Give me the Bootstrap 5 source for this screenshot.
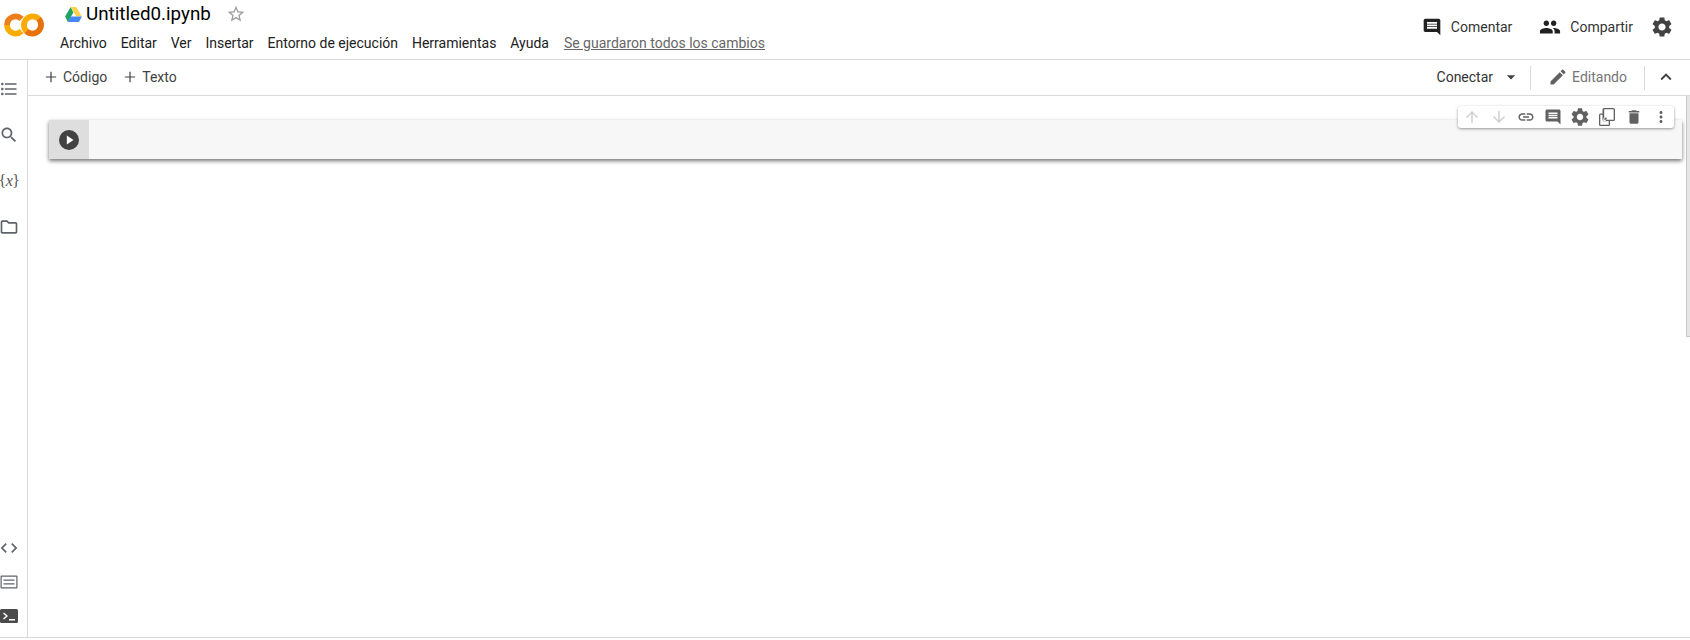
<!DOCTYPE html>
<html lang="es">
<head>
<meta charset="utf-8">
<title>Untitled0.ipynb</title>
<link href="https://cdn.jsdelivr.net/npm/bootstrap@5.3.0/dist/css/bootstrap.min.css" rel="stylesheet">
<style>
html,body{height:640px;overflow:hidden;background:#fff}
body{font-family:Roboto,"Liberation Sans",sans-serif;font-size:14px;color:#212121;line-height:20px}
svg{display:block;fill:currentColor;flex:none}
.app-shell{height:638px;border-bottom:1px solid #dadada}
.top-head{height:60px;border-bottom:1px solid #dadada;padding-left:4px}
.logo-slot{width:41px;height:59px;padding-top:13px}
.title-col{margin-left:15px;width:900px}
.title-line{height:33px;padding-bottom:5px;padding-left:5px}
.doc-name{font-size:18.8px;line-height:22px;color:#000;margin-left:4px;width:131px}
.star-ic{margin-left:9px;color:#9e9e9e}
.menu-line{gap:13.9px;height:20px}
.save-note{color:#666;text-decoration:underline;margin-left:1px}
.head-act{color:#333;padding-right:18px;height:54px}
.act-lbl{margin-left:9px}
.act-one{margin-right:27px}
.side-rail{width:28px;border-right:1px solid #dadada;color:#5f6368}
.rail-top,.rail-low{display:flex;flex-direction:column;align-items:center;padding-right:9px}
.rail-top{padding-top:19px}
.rail-low{padding-bottom:11px;gap:14px}
.rail-item{height:20px;display:flex;align-items:center;justify-content:center;margin-bottom:26px}
.math-ic{font-family:"Liberation Serif",serif;font-size:16px;color:#555;white-space:nowrap;letter-spacing:-.5px}
.tool-row{height:36px;border-bottom:1px solid #dadada;padding:0 13px 2px 17px;color:#424242}
.add-btn{margin-right:17px;gap:6px;color:#424242}
.add-btn svg{width:12px;height:12px}
.conn-lbl{color:#333}
.tool-sep{width:1px;height:24px;background:#dadada;margin-top:2px}
.edit-lbl{color:#757575}
.work-area{position:relative;flex:1;min-height:0}
.scroll-thumb{position:absolute;right:0;top:0;width:4px;height:241px;background:#e6e6e6;border-left:1px solid #c8c8c8;border-bottom:1px solid #c8c8c8}
.code-cell{position:absolute;left:21px;top:24px;width:1633px;height:39px;background:#f7f7f7;box-shadow:0 2px 4px rgba(0,0,0,.55)}
.run-gutter{width:40px;background:#dedede}
.run-dot{width:20px;height:20px;border-radius:50%;background:#424242;color:#fff}
.cell-bar{position:absolute;left:1430px;top:10px;width:216px;height:22px;background:#fff;border-radius:3px;box-shadow:0 1px 3px rgba(0,0,0,.4);color:#616161}
.bar-slot{width:27px;height:22px}
.bar-slot.dim{color:#cfcfcf}
</style>
</head>
<body>
<div class="app-shell d-flex flex-column">
  <header class="top-head d-flex">
    <div class="logo-slot">
      <svg width="41" height="24" viewBox="0 0 41 24">
        <path d="M17.650 18.150A8.700 8.700 0 0 1 3 12" stroke="#f9ab00" stroke-width="5.800" fill="none"/>
        <path d="M17.650 5.850A8.700 8.700 0 0 0 3 12" stroke="#ee7d1b" stroke-width="5.800" fill="none"/>
        <path d="M22.350 18.150A8.700 8.700 0 0 1 34.650 5.850" stroke="#f9ab00" stroke-width="5.800" fill="none"/>
        <path d="M34.650 5.850A8.700 8.700 0 0 1 22.350 18.150" stroke="#e8710a" stroke-width="5.800" fill="none"/>
      </svg>
    </div>
    <div class="title-col">
      <div class="title-line d-flex align-items-center">
        <svg width="17" height="15" viewBox="0 0 87.300 78"><path d="M29 0 0 50l14 28 29-50z" fill="#1fa463"/><path d="M29 0h29l29.300 50H58z" fill="#ffd04b"/><path d="M14 78h58l15.300-28H29z" fill="#4587f4"/></svg>
        <span class="doc-name">Untitled0.ipynb</span>
        <svg class="star-ic" width="20" height="20" viewBox="0 0 24 24"><path d="M22 9.240l-7.190-.62L12 2 9.190 8.630 2 9.240l5.460 4.730L5.820 21 12 17.270 18.180 21l-1.630-7.030L22 9.240zM12 15.400l-3.760 2.270 1-4.280-3.320-2.880 4.380-.38L12 6.100l1.710 4.040 4.380.38-3.320 2.880 1 4.280L12 15.400z"/></svg>
      </div>
      <nav class="menu-line d-flex">
        <span>Archivo</span><span>Editar</span><span>Ver</span><span>Insertar</span><span>Entorno de ejecución</span><span>Herramientas</span><span>Ayuda</span><span class="save-note">Se guardaron todos los cambios</span>
      </nav>
    </div>
    <div class="head-act ms-auto d-flex align-items-center">
      <div class="act-one d-flex align-items-center">
        <svg width="20" height="20" viewBox="0 0 24 24" style="color:#212121"><path d="M21.990 4c0-1.100-.89-2-1.990-2H4c-1.100 0-2 .9-2 2v12c0 1.100.9 2 2 2h14l4 4-.01-18zM18 14H6v-2h12v2zm0-3H6V9h12v2zm0-3H6V6h12v2z"/></svg>
        <span class="act-lbl">Comentar</span>
      </div>
      <div class="act-one d-flex align-items-center" style="margin-right:19px">
        <svg width="22" height="22" viewBox="0 0 24 24" style="color:#212121"><path d="M16 11c1.660 0 2.990-1.340 2.990-3S17.660 5 16 5c-1.660 0-3 1.340-3 3s1.340 3 3 3zm-8 0c1.660 0 2.990-1.340 2.990-3S9.660 5 8 5C6.340 5 5 6.340 5 8s1.340 3 3 3zm0 2c-2.330 0-7 1.170-7 3.500V19h14v-2.500c0-2.330-4.670-3.500-7-3.500zm8 0c-.29 0-.62.02-.97.05 1.160.84 1.970 1.970 1.970 3.450V19h6v-2.500c0-2.330-4.670-3.500-7-3.500z"/></svg>
        <span class="act-lbl">Compartir</span>
      </div>
      <svg width="20" height="20" viewBox="2 2 20 20" style="color:#424242"><path d="M19.140 12.940c.04-.3.06-.61.06-.94 0-.32-.02-.64-.07-.94l2.030-1.580c.18-.14.23-.41.12-.61l-1.920-3.320c-.12-.22-.37-.29-.59-.22l-2.390.96c-.5-.38-1.030-.7-1.620-.94l-.36-2.540c-.04-.24-.24-.41-.48-.41h-3.840c-.24 0-.43.17-.47.41l-.36 2.540c-.59.24-1.130.57-1.620.94l-2.390-.96c-.22-.08-.47 0-.59.22L2.740 8.870c-.12.21-.08.47.12.61l2.030 1.580c-.05.3-.09.63-.09.94s.02.64.07.94l-2.030 1.580c-.18.14-.23.41-.12.61l1.920 3.320c.12.22.37.29.59.22l2.390-.96c.5.38 1.030.7 1.620.94l.36 2.540c.05.24.24.41.48.41h3.840c.24 0 .44-.17.47-.41l.36-2.540c.59-.24 1.130-.56 1.620-.94l2.390.96c.22.08.47 0 .59-.22l1.920-3.320c.12-.22.07-.47-.12-.61l-2.010-1.580zM12 15.600c-1.980 0-3.600-1.620-3.600-3.600s1.620-3.600 3.600-3.600 3.600 1.620 3.600 3.600-1.620 3.600-3.600 3.600z"/></svg>
    </div>
  </header>
  <div class="d-flex flex-grow-1" style="min-height:0">
    <aside class="side-rail d-flex flex-column justify-content-between">
      <div class="rail-top">
        <div class="rail-item"><svg width="20" height="20" viewBox="0 0 24 24"><path d="M4 10.500c-.83 0-1.500.67-1.500 1.500s.67 1.500 1.500 1.500 1.500-.67 1.500-1.500-.67-1.500-1.500-1.500zm0-6c-.83 0-1.500.67-1.500 1.500S3.170 7.500 4 7.500 5.500 6.830 5.500 6 4.830 4.500 4 4.500zm0 12c-.83 0-1.500.68-1.500 1.500s.68 1.500 1.500 1.500 1.500-.68 1.500-1.500-.67-1.500-1.500-1.500zM7 19h14v-2H7v2zm0-6h14v-2H7v2zm0-8v2h14V5H7z"/></svg></div>
        <div class="rail-item"><svg width="20" height="20" viewBox="0 0 24 24"><path d="M15.500 14h-.79l-.28-.27C15.410 12.590 16 11.110 16 9.500 16 5.910 13.090 3 9.500 3S3 5.910 3 9.500 5.910 16 9.500 16c1.610 0 3.090-.59 4.230-1.570l.27.28v.79l5 4.990L20.490 19l-4.990-5zm-6 0C7.010 14 5 11.990 5 9.500S7.010 5 9.500 5 14 7.010 14 9.500 11.990 14 9.500 14z"/></svg></div>
        <div class="rail-item"><span class="math-ic">{<i>x</i>}</span></div>
        <div class="rail-item"><svg width="20" height="20" viewBox="0 0 24 24"><path d="M9.170 6l2 2H20v10H4V6h5.170M10 4H4c-1.100 0-1.990.9-1.990 2L2 18c0 1.100.9 2 2 2h16c1.100 0 2-.9 2-2V8c0-1.100-.9-2-2-2h-8l-2-2z"/></svg></div>
      </div>
      <div class="rail-low">
        <svg width="20" height="20" viewBox="0 0 24 24"><path d="M9.400 16.600L4.800 12l4.600-4.600L8 6l-6 6 6 6 1.400-1.400zm5.200 0l4.600-4.600-4.600-4.600L16 6l6 6-6 6-1.400-1.400z"/></svg>
        <svg width="18" height="20" viewBox="0 0 18 20"><path d="M1.500 3.500h15a1 1 0 0 1 1 1v11a1 1 0 0 1-1 1h-15a1 1 0 0 1-1-1v-11a1 1 0 0 1 1-1zm.2 1.300v10.400h14.600V4.800zM3.500 7.500h11v1.300h-11zm0 3.700h11v1.300h-11z" fill-rule="evenodd"/></svg>
        <svg width="18" height="20" viewBox="0 0 18 20" style="color:#4a4a4a"><path d="M1.500 3h15a1.500 1.500 0 0 1 1.500 1.500v11a1.500 1.500 0 0 1-1.500 1.500h-15A1.500 1.500 0 0 1 0 15.500v-11A1.500 1.500 0 0 1 1.500 3zM3 7.500l3 2.500-3 2.500 1 1 4-3.500-4-3.500zM9 13v1.500h6V13z" fill-rule="evenodd"/></svg>
      </div>
    </aside>
    <main class="d-flex flex-column flex-grow-1" style="min-width:0">
      <div class="tool-row d-flex align-items-center">
        <div class="add-btn d-flex align-items-center">
          <svg viewBox="0 0 14 14"><path d="M6.300 1h1.400v5.300H13v1.400H7.700V13H6.300V7.700H1V6.300h5.300z"/></svg><span>Código</span>
        </div>
        <div class="add-btn d-flex align-items-center">
          <svg viewBox="0 0 14 14"><path d="M6.300 1h1.400v5.300H13v1.400H7.700V13H6.300V7.700H1V6.300h5.300z"/></svg><span>Texto</span>
        </div>
        <span class="conn-lbl ms-auto">Conectar</span>
        <svg class="ms-2" width="20" height="20" viewBox="0 0 24 24" style="color:#424242"><path d="M7 10l5 5 5-5z"/></svg>
        <div class="tool-sep" style="margin-left:9px;margin-right:17px"></div>
        <svg width="20" height="20" viewBox="0 0 24 24" style="color:#616161"><path d="M3 17.250V21h3.750L17.810 9.940l-3.750-3.750L3 17.250zM20.710 7.040c.39-.39.39-1.020 0-1.410l-2.340-2.340c-.39-.39-1.020-.39-1.410 0l-1.830 1.830 3.750 3.750 1.830-1.830z"/></svg>
        <span class="edit-lbl" style="margin-left:4px">Editando</span>
        <div class="tool-sep" style="margin-left:17px;margin-right:10px"></div>
        <svg width="22" height="22" viewBox="0 0 24 24" style="color:#424242"><path d="M12 8l-6 6 1.410 1.410L12 10.830l4.590 4.580L18 14z"/></svg>
      </div>
      <div class="work-area">
        <div class="scroll-thumb"></div>
        <div class="code-cell d-flex">
          <div class="run-gutter d-flex align-items-center justify-content-center">
            <div class="run-dot d-flex align-items-center justify-content-center">
              <svg width="12" height="12" viewBox="0 0 12 12"><path d="M3.800 1.500v9l6.700-4.500z"/></svg>
            </div>
          </div>
        </div>
        <div class="cell-bar d-flex align-items-center">
          <div class="bar-slot dim d-flex align-items-center justify-content-center"><svg width="18" height="18" viewBox="0 0 24 24"><path d="M4 12l1.410 1.410L11 7.830V20h2V7.830l5.580 5.590L20 12l-8-8-8 8z"/></svg></div>
          <div class="bar-slot dim d-flex align-items-center justify-content-center"><svg width="18" height="18" viewBox="0 0 24 24"><path d="M20 12l-1.410-1.410L13 16.170V4h-2v12.170l-5.580-5.590L4 12l8 8 8-8z"/></svg></div>
          <div class="bar-slot d-flex align-items-center justify-content-center"><svg width="18" height="18" viewBox="0 0 24 24"><path d="M3.900 12c0-1.710 1.390-3.100 3.100-3.100h4V7H7c-2.760 0-5 2.240-5 5s2.240 5 5 5h4v-1.900H7c-1.710 0-3.100-1.390-3.100-3.100zM8 13h8v-2H8v2zm9-6h-4v1.900h4c1.710 0 3.100 1.390 3.100 3.100s-1.390 3.100-3.100 3.100h-4V17h4c2.760 0 5-2.240 5-5s-2.240-5-5-5z"/></svg></div>
          <div class="bar-slot d-flex align-items-center justify-content-center"><svg width="18" height="18" viewBox="0 0 24 24"><path d="M21.990 4c0-1.100-.89-2-1.990-2H4c-1.100 0-2 .9-2 2v12c0 1.100.9 2 2 2h14l4 4-.01-18zM18 14H6v-2h12v2zm0-3H6V9h12v2zm0-3H6V6h12v2z"/></svg></div>
          <div class="bar-slot d-flex align-items-center justify-content-center"><svg width="18" height="18" viewBox="2 2 20 20"><path d="M19.140 12.940c.04-.3.06-.61.06-.94 0-.32-.02-.64-.07-.94l2.030-1.580c.18-.14.23-.41.12-.61l-1.920-3.320c-.12-.22-.37-.29-.59-.22l-2.390.96c-.5-.38-1.030-.7-1.620-.94l-.36-2.540c-.04-.24-.24-.41-.48-.41h-3.840c-.24 0-.43.17-.47.41l-.36 2.540c-.59.24-1.130.57-1.620.94l-2.390-.96c-.22-.08-.47 0-.59.22L2.740 8.870c-.12.21-.08.47.12.61l2.030 1.580c-.05.3-.09.63-.09.94s.02.64.07.94l-2.030 1.580c-.18.14-.23.41-.12.61l1.920 3.320c.12.22.37.29.59.22l2.390-.96c.5.38 1.030.7 1.620.94l.36 2.540c.05.24.24.41.48.41h3.840c.24 0 .44-.17.47-.41l.36-2.540c.59-.24 1.130-.56 1.620-.94l2.390.96c.22.08.47 0 .59-.22l1.920-3.320c.12-.22.07-.47-.12-.61l-2.010-1.580zM12 15.600c-1.980 0-3.600-1.620-3.600-3.600s1.620-3.600 3.600-3.600 3.600 1.620 3.600 3.600-1.620 3.600-3.600 3.600z"/></svg></div>
          <div class="bar-slot d-flex align-items-center justify-content-center"><svg width="16" height="18" viewBox="0 0 16 18"><path d="M5 0h9.500A1.500 1.500 0 0 1 16 1.500v10a1.500 1.500 0 0 1-1.500 1.500H11v3.500a1.500 1.500 0 0 1-1.500 1.500h-8A1.500 1.500 0 0 1 0 16.500V7a1.500 1.500 0 0 1 1.500-1.500h2v-4A1.500 1.500 0 0 1 5 0zm.2 1.300v10.400h9.500V1.300zM1.300 6.800v9.900h8.400V13H5a1.500 1.500 0 0 1-1.500-1.500V6.800zM7 9.200 5.200 11l-.9-.9v3.100h3.100l-.9-.9L8 10.200z" fill-rule="evenodd"/></svg></div>
          <div class="bar-slot d-flex align-items-center justify-content-center"><svg width="18" height="18" viewBox="0 0 24 24"><path d="M6 19c0 1.100.9 2 2 2h8c1.100 0 2-.9 2-2V7H6v12zM19 4h-3.500l-1-1h-5l-1 1H5v2h14V4z"/></svg></div>
          <div class="bar-slot d-flex align-items-center justify-content-center"><svg width="18" height="18" viewBox="0 0 24 24"><path d="M12 8c1.100 0 2-.9 2-2s-.9-2-2-2-2 .9-2 2 .9 2 2 2zm0 2c-1.100 0-2 .9-2 2s.9 2 2 2 2-.9 2-2-.9-2-2-2zm0 6c-1.100 0-2 .9-2 2s.9 2 2 2 2-.9 2-2-.9-2-2-2z"/></svg></div>
        </div>
      </div>
    </main>
  </div>
</div>
<script src="https://cdn.jsdelivr.net/npm/bootstrap@5.3.0/dist/js/bootstrap.bundle.min.js"></script>
</body>
</html>
